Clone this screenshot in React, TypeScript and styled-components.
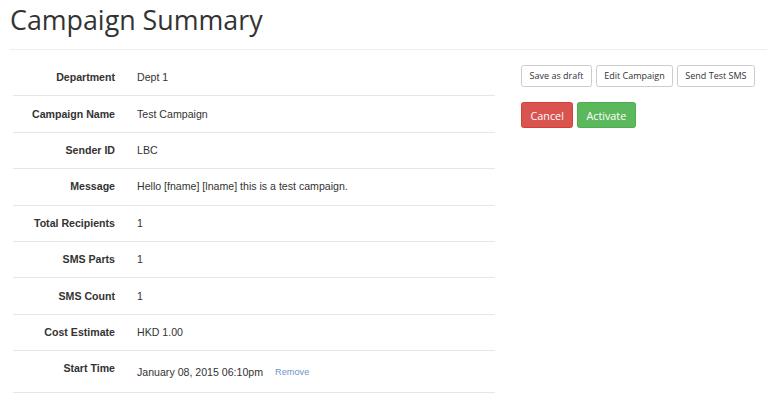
import styled, { createGlobalStyle } from "styled-components";

const GlobalStyle = createGlobalStyle`
	html, body {
		margin: 0;
		padding: 0;
		background: #fff;
	}
	body {
		font-family: "Liberation Sans", Arial, sans-serif;
		color: #333;
	}
`;

const Page = styled.div`
	padding-left: 10px;
`;

const Title = styled.h1`
	margin: 5px 0 0;
	font-family: "Open Sans", sans-serif;
	font-weight: 400;
	font-size: 26.8px;
	line-height: 30px;
	color: #333;
`;

const Divider = styled.hr`
	margin: 14px 0 0;
	border: 0;
	border-top: 1px solid #eee;
`;

const Content = styled.div`
	display: flex;
	align-items: flex-start;
	margin-top: 10px;
`;

const SummaryTable = styled.div`
	margin-left: 3px;
	width: 482px;
	display: flex;
	flex-direction: column;
`;

const Row = styled.div<{ $tall?: boolean }>`
	display: grid;
	grid-template-columns: 110px 1fr;
	align-items: ${(p) => (p.$tall ? "start" : "center")};
	height: ${(p) => (p.$tall ? "42px" : "36.4px")};
	box-sizing: border-box;
	border-bottom: 1px solid #e6e6e6;
	font-size: 10.6px;
	line-height: 12px;
	padding-bottom: 1px;
`;

const Label = styled.div<{ $pad?: number }>`
	font-weight: 700;
	text-align: right;
	padding-right: 8px;
	padding-top: ${(p) => p.$pad ?? 0}px;
`;

const Value = styled.div<{ $pad?: number }>`
	padding-left: 14px;
	padding-top: ${(p) => p.$pad ?? 0}px;
	display: flex;
	align-items: center;
	gap: 12px;
`;

const RemoveLink = styled.a`
	font-size: 9.2px;
	color: #6a93cf;
	text-decoration: none;
	cursor: pointer;
	padding-top: 1px;
`;

const Actions = styled.div`
	margin-left: 26px;
	padding-top: 5px;
	display: flex;
	flex-direction: column;
	gap: 15px;
`;

const ButtonRow = styled.div`
	display: flex;
	gap: 3.5px;
`;

const Button = styled.button<{ $variant?: "default" | "danger" | "success" }>`
	font-family: "Open Sans", sans-serif;
	box-sizing: border-box;
	border-radius: 2.5px;
	border: 1px solid
		${(p) =>
			p.$variant === "danger"
				? "#d43f3a"
				: p.$variant === "success"
				? "#4cae4c"
				: "#ccc"};
	background: ${(p) =>
		p.$variant === "danger"
			? "#d9534f"
			: p.$variant === "success"
			? "#5cb85c"
			: "#fff"};
	color: ${(p) => (p.$variant && p.$variant !== "default" ? "#fff" : "#333")};
	cursor: pointer;
	white-space: nowrap;
`;

const SmallButton = styled(Button)`
	font-size: 9px;
	line-height: 12.5px;
	padding: 4px 7.6px;
	height: 22px;
`;

const LargeButton = styled(Button)`
	font-size: 10.8px;
	line-height: 15px;
	padding: 4.5px 8.5px;
	height: 26px;
`;

const rows: [string, string][] = [
	["Department", "Dept 1"],
	["Campaign Name", "Test Campaign"],
	["Sender ID", "LBC"],
	["Message", "Hello [fname] [lname] this is a test campaign."],
	["Total Recipients", "1"],
	["SMS Parts", "1"],
	["SMS Count", "1"],
	["Cost Estimate", "HKD 1.00"],
];

const App = () => (
	<>
		<GlobalStyle />
		<Page>
			<Title>Campaign Summary</Title>
			<Divider />
			<Content>
				<SummaryTable>
					{rows.map(([label, value]) => (
						<Row key={label}>
							<Label>{label}</Label>
							<Value>{value}</Value>
						</Row>
					))}
					<Row $tall>
						<Label $pad={11}>Start Time</Label>
						<Value $pad={14}>
							<span>January 08, 2015 06:10pm</span>
							<RemoveLink>Remove</RemoveLink>
						</Value>
					</Row>
				</SummaryTable>
				<Actions>
					<ButtonRow>
						<SmallButton>Save as draft</SmallButton>
						<SmallButton>Edit Campaign</SmallButton>
						<SmallButton>Send Test SMS</SmallButton>
					</ButtonRow>
					<ButtonRow>
						<LargeButton $variant="danger">Cancel</LargeButton>
						<LargeButton $variant="success">Activate</LargeButton>
					</ButtonRow>
				</Actions>
			</Content>
		</Page>
	</>
);

export default App;
